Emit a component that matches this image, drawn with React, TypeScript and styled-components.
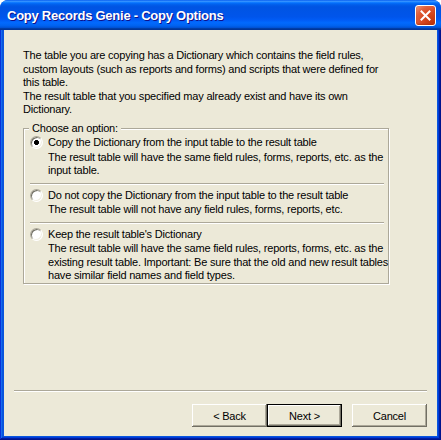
import React from 'react';
import styled, { createGlobalStyle } from 'styled-components';

const GlobalStyle = createGlobalStyle`
  html, body { margin: 0; padding: 0; background: #ffffff; }
  body { font-family: "Liberation Sans", Arial, sans-serif; }
  * { box-sizing: border-box; }
`;

const Window = styled.div`
  width: 441px;
  height: 440px;
  display: flex;
  flex-direction: column;
  border-radius: 8px 8px 0 0;
  overflow: hidden;
  background: #0855dd;
`;

const TitleBar = styled.div`
  height: 30px;
  flex: none;
  display: flex;
  align-items: center;
  justify-content: space-between;
  padding: 1px 5px 0 7px;
  background: linear-gradient(
    to bottom,
    #0058ee 0%,
    #3a93ff 4%,
    #288eff 6%,
    #127dff 8%,
    #036ffc 10%,
    #0262ee 14%,
    #0057e5 20%,
    #0054e3 24%,
    #0055eb 56%,
    #005bf5 66%,
    #026afe 76%,
    #0062ef 86%,
    #0052d6 92%,
    #0040ab 94%,
    #003092 100%
  );
`;

const TitleText = styled.span`
  color: #ffffff;
  font-family: "Liberation Sans", Arial, sans-serif;
  font-weight: bold;
  font-size: 13px;
  letter-spacing: -0.25px;
  text-shadow: 1px 1px #0f1089;
  white-space: nowrap;
`;

const CloseButton = styled.button`
  width: 21px;
  height: 21px;
  padding: 0;
  border: 1px solid #ffffff;
  border-radius: 3px;
  display: flex;
  align-items: center;
  justify-content: center;
  background: radial-gradient(circle at 85% 85%, #c2360c 0%, #d84a22 45%, #e0603c 70%, #ee9478 95%);
  box-shadow: inset 0 -1px 2px rgba(160, 40, 0, 0.6);
`;

const Frame = styled.div`
  flex: 1;
  display: flex;
  padding: 0 4px 4px 4px;
  background: #0855dd;
  box-shadow: inset -1px -1px #00138c, inset 1px 0 #0831d9, inset -2px -2px #001ea0,
    inset 2px 0 #166aee, inset -3px -3px #003bda, inset 3px 0 #0855dd;
`;

const Body = styled.div`
  flex: 1;
  display: flex;
  flex-direction: column;
  background: #ece9d8;
  color: #000000;
  font-size: 11px;
  letter-spacing: -0.2px;
`;

const Content = styled.div`
  padding: 19px 19px 0 19px;
`;

const Paragraph = styled.p`
  margin: 0;
  line-height: 13.5px;
  white-space: nowrap;
`;

const GroupBox = styled.div`
  position: relative;
  width: 366px;
  margin-top: 11.5px;
  border: 1px solid #aca899;
  box-shadow: 1px 1px 0 #ffffff, inset 1px 1px 0 #ffffff;
`;

const GroupLegend = styled.span`
  position: absolute;
  left: 5px;
  top: -7.25px;
  padding: 0 3px 0 3px;
  background: #ece9d8;
  line-height: 13.5px;
  white-space: nowrap;
`;

const OptionList = styled.div`
  display: flex;
  flex-direction: column;
  padding: 7px 4px 0 6px;
`;

const Option = styled.label`
  display: grid;
  grid-template-columns: 13px 1fr;
  column-gap: 5px;
  align-items: center;
`;

const Radio = styled.input.attrs({ type: 'radio' })`
  appearance: none;
  -webkit-appearance: none;
  margin: 0;
  width: 13px;
  height: 13px;
  border-radius: 50%;
  border: 1px solid;
  border-color: #aca899 #ffffff #ffffff #aca899;
  box-shadow: inset 1px 1px #716f64, inset -1px -1px #f1efe2;
  background: #ffffff;
  &:checked {
    background: radial-gradient(circle at center, #000000 0, #000000 2.2px, #ffffff 2.7px);
  }
`;

const OptionLabel = styled.span`
  line-height: 13.5px;
  white-space: nowrap;
`;

const OptionDesc = styled.span`
  grid-column: 2;
  margin-top: 1px;
  line-height: 13.5px;
  white-space: nowrap;
`;

const Etched = styled.div<{ $above: number; $below: number }>`
  height: 2px;
  border-top: 1px solid #aca899;
  border-bottom: 1px solid #ffffff;
  margin-top: ${(p) => p.$above}px;
  margin-bottom: ${(p) => p.$below}px;
`;

const Footer = styled.div`
  margin-top: auto;
  padding: 0 10px 9px 10px;
  display: flex;
  flex-direction: column;
`;

const ButtonRow = styled.div`
  display: flex;
  justify-content: flex-end;
`;

const PushButton = styled.button<{ $default?: boolean; $gap?: number }>`
  width: 75px;
  height: 23px;
  padding: 0;
  margin-left: ${(p) => p.$gap ?? 0}px;
  font-family: "Liberation Sans", Arial, sans-serif;
  font-size: 11px;
  letter-spacing: -0.2px;
  color: #000000;
  background: #ece9d8;
  border: ${(p) => (p.$default ? '1px solid #000000' : 'none')};
  box-shadow: inset -1px -1px #716f64, inset 1px 1px #ffffff, inset -2px -2px #aca899;
`;

const CloseIcon = () => (
  <svg width="11" height="11" viewBox="0 0 11 11">
    <path d="M1.5 1.5 L9.5 9.5 M9.5 1.5 L1.5 9.5" stroke="#ffffff" strokeWidth="2" strokeLinecap="square" />
  </svg>
);

const options = [
  {
    label: 'Copy the Dictionary from the input table to the result table',
    desc: ['The result table will have the same field rules, forms, reports, etc. as the', 'input table.'],
    checked: true,
  },
  {
    label: 'Do not copy the Dictionary from the input table to the result table',
    desc: ['The result table will not have any field rules, forms, reports, etc.'],
    checked: false,
  },
  {
    label: "Keep the result table's Dictionary",
    desc: [
      'The result table will have the same field rules, reports, forms, etc. as the',
      'existing result table. Important: Be sure that the old and new result tables',
      'have similar field names and field types.',
    ],
    checked: false,
  },
];

export default function App() {
  return (
    <>
      <GlobalStyle />
      <Window>
        <TitleBar>
          <TitleText>Copy Records Genie - Copy Options</TitleText>
          <CloseButton aria-label="Close">
            <CloseIcon />
          </CloseButton>
        </TitleBar>
        <Frame>
          <Body>
            <Content>
              <Paragraph>
                The table you are copying has a Dictionary which contains the field rules,
                <br />
                custom layouts (such as reports and forms) and scripts that were defined for
                <br />
                this table.
              </Paragraph>
              <Paragraph>
                The result table that you specified may already exist and have its own
                <br />
                Dictionary.
              </Paragraph>
              <GroupBox>
                <GroupLegend>Choose an option:</GroupLegend>
                <OptionList>
                  {options.map((o, i) => (
                    <React.Fragment key={i}>
                      {i > 0 && <Etched $above={5} $below={4} />}
                      <Option>
                        <Radio name="copyopt" defaultChecked={o.checked} />
                        <OptionLabel>{o.label}</OptionLabel>
                        <OptionDesc>
                          {o.desc.map((d, j) => (
                            <React.Fragment key={j}>
                              {j > 0 && <br />}
                              {d}
                            </React.Fragment>
                          ))}
                        </OptionDesc>
                      </Option>
                    </React.Fragment>
                  ))}
                </OptionList>
              </GroupBox>
            </Content>
            <Footer>
              <Etched $above={0} $below={12} />
              <ButtonRow>
                <PushButton>&lt; Back</PushButton>
                <PushButton $default>Next &gt;</PushButton>
                <PushButton $gap={10}>Cancel</PushButton>
              </ButtonRow>
            </Footer>
          </Body>
        </Frame>
      </Window>
    </>
  );
}
